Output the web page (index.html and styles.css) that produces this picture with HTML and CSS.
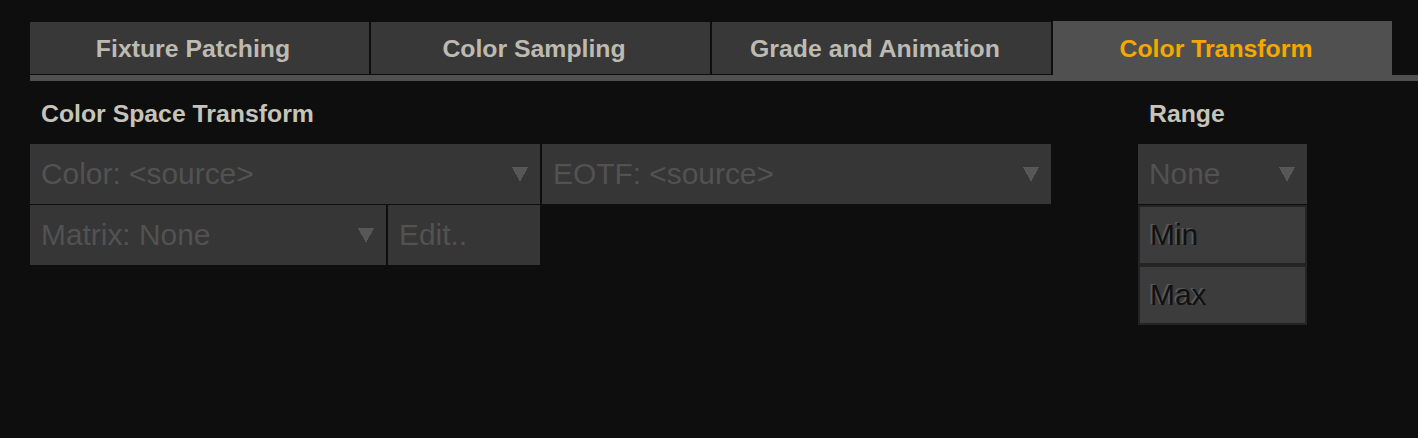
FILE: index.html
```html
<!DOCTYPE html>
<html>
<head>
<meta charset="utf-8">
<link rel="stylesheet" href="styles.css">
</head>
<body>
<div class="app">
  <div class="tabs">
    <div class="tab">Fixture Patching</div>
    <div class="tab">Color Sampling</div>
    <div class="tab">Grade and Animation</div>
    <div class="tab active">Color Transform</div>
  </div>
  <div class="tabbar"></div>
  <div class="content">
    <section class="cst">
      <h2 class="label">Color Space Transform</h2>
      <div class="grid">
        <div class="dd span2"><span>Color: &lt;source&gt;</span><svg class="arrow" width="16" height="15" viewBox="0 0 16 15"><polygon points="0,0 16,0 8,15" /></svg></div>
        <div class="dd"><span>EOTF: &lt;source&gt;</span><svg class="arrow" width="16" height="15" viewBox="0 0 16 15"><polygon points="0,0 16,0 8,15" /></svg></div>
        <div class="dd"><span>Matrix: None</span><svg class="arrow" width="16" height="15" viewBox="0 0 16 15"><polygon points="0,0 16,0 8,15" /></svg></div>
        <div class="dd"><span>Edit..</span></div>
      </div>
    </section>
    <section class="range">
      <h2 class="label">Range</h2>
      <div class="rcol">
        <div class="dd"><span>None</span><svg class="arrow" width="16" height="15" viewBox="0 0 16 15"><polygon points="0,0 16,0 8,15" /></svg></div>
        <div class="field">Min</div>
        <div class="field">Max</div>
      </div>
    </section>
  </div>
</div>
</body>
</html>
```
FILE: styles.css
```css
html, body {
  margin: 0;
  padding: 0;
  background: #0e0e0e;
  width: 1418px;
  height: 438px;
  overflow: hidden;
}
body {
  font-family: "Liberation Sans", Arial, sans-serif;
}
.app {
  padding-left: 30px;
  padding-top: 21px;
}
.tabs {
  display: flex;
  gap: 2px;
  align-items: flex-end;
  height: 54px;
}
.tab {
  width: 339px;
  height: 52px;
  margin-bottom: 1px;
  background: #383838;
  color: #bdbbb1;
  font-weight: bold;
  font-size: 24.8px;
  display: flex;
  align-items: center;
  justify-content: center;
  padding-top: 1px;
  padding-right: 13px;
  box-sizing: border-box;
}
.tab.active {
  height: 54px;
  margin-bottom: 0;
  background: #505050;
  color: #f5a800;
}
.tabbar {
  height: 6px;
  background: #505050;
}
.content {
  display: flex;
  padding-top: 19px;
  gap: 87px;
}
.label {
  margin: 0;
  font-size: 24.8px;
  font-weight: bold;
  line-height: 28px;
  color: #c6c4ba;
  padding-left: 11px;
  height: 28px;
  margin-bottom: 16px;
}
.cst {
  width: 1021px;
}
.grid {
  display: grid;
  grid-template-columns: 356px 152px 509px;
  grid-auto-rows: 60px;
  column-gap: 2px;
  row-gap: 1px;
}
.span2 {
  grid-column: span 2;
}
.dd {
  background: #363636;
  color: #525252;
  font-size: 29.9px;
  display: flex;
  align-items: center;
  justify-content: space-between;
  padding: 0 12px 0 11px;
  box-sizing: border-box;
}
.arrow {
  display: block;
  fill: #575757;
  shape-rendering: crispEdges;
}
.range {
  width: 169px;
}
.rcol {
  display: flex;
  flex-direction: column;
}
.rcol .dd {
  height: 60px;
  margin-bottom: 1px;
}
.field {
  height: 60px;
  box-sizing: border-box;
  border: 2px solid #242424;
  background: #3c3c3c;
  color: #111111;
  font-size: 29.9px;
  display: flex;
  align-items: center;
  padding-left: 10px;
  text-shadow: -2px -1px 0 #585858;
}
```
